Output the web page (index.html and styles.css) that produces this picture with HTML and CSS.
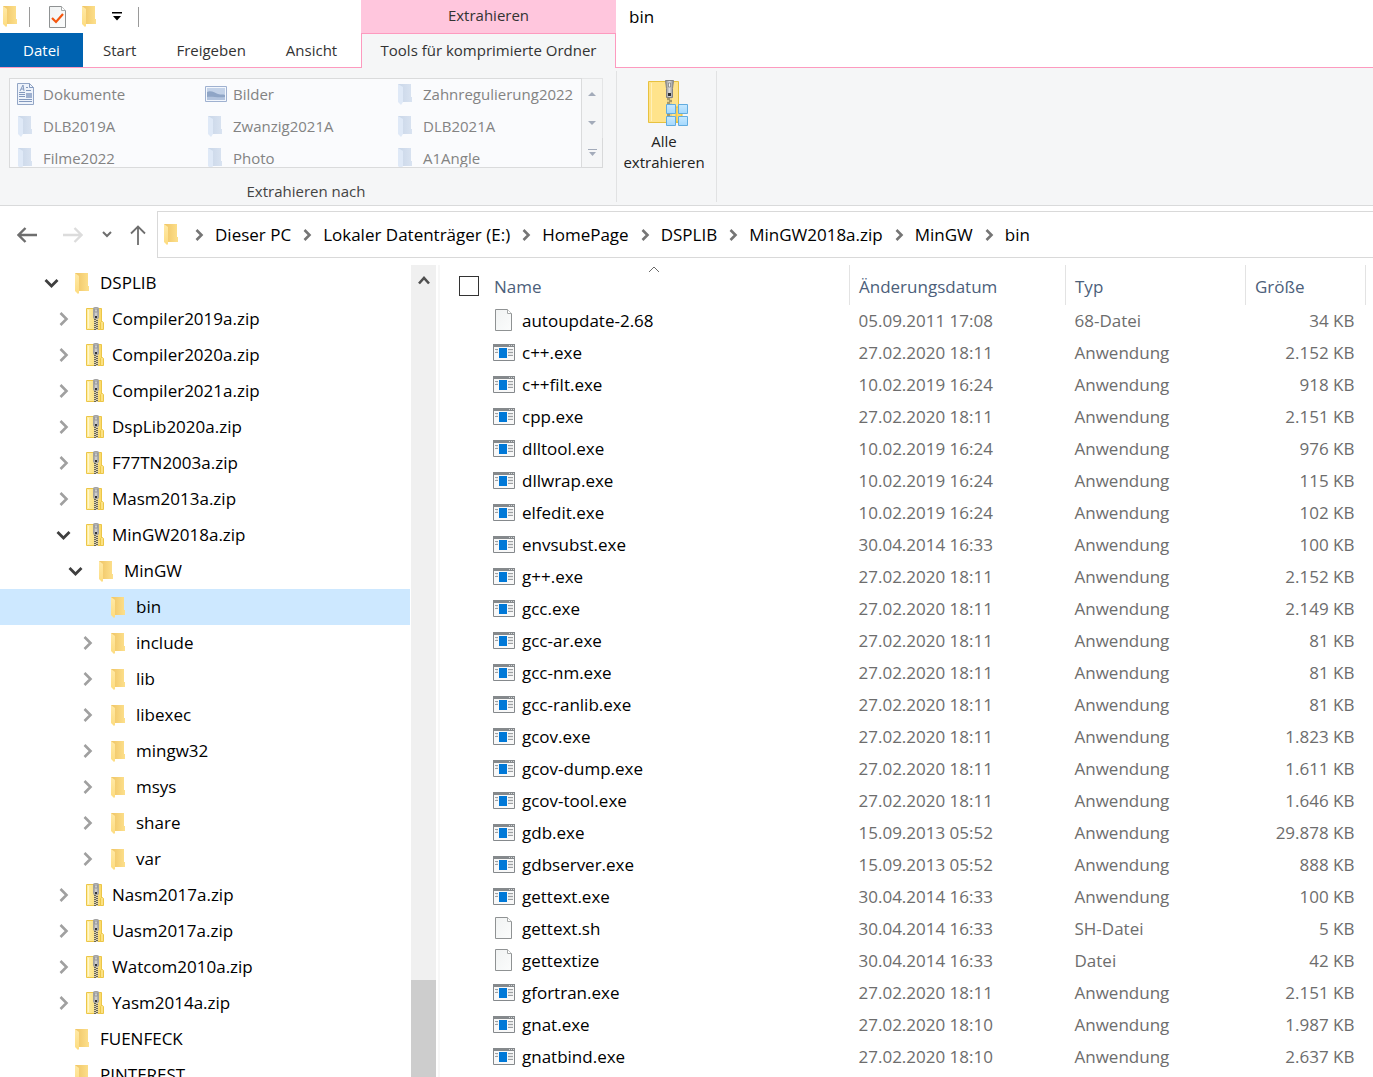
FILE: index.html
```html
<!DOCTYPE html>
<html lang="de">
<head>
<meta charset="utf-8">
<meta name="viewport" content="width=device-width, initial-scale=1">
<title>bin</title>
<link rel="stylesheet" href="styles.css">
</head>
<body>
<svg class="sprite" aria-hidden="true">
  <defs>
    <linearGradient id="g-back"><stop offset="0" stop-color="#efc465"/><stop offset="1" stop-color="#fde08c"/></linearGradient>
    <linearGradient id="g-flap" x2="0" y2="1"><stop offset="0" stop-color="#ffe9a6"/><stop offset="1" stop-color="#fddc80"/></linearGradient>
    <linearGradient id="g-dback"><stop offset="0" stop-color="#c9d6e8"/><stop offset="1" stop-color="#d9e3f1"/></linearGradient>
    <linearGradient id="g-page" x2="1" y2="1"><stop offset="0" stop-color="#f1f3f3"/><stop offset="1" stop-color="#fbfcfc"/></linearGradient>
    <linearGradient id="g-zip"><stop offset="0" stop-color="#fff0a8"/><stop offset="1" stop-color="#fbd968"/></linearGradient>
    <linearGradient id="g-metal"><stop offset="0" stop-color="#8d8d8d"/><stop offset=".5" stop-color="#dcdcdc"/><stop offset="1" stop-color="#8a8a8a"/></linearGradient>
    <linearGradient id="g-tile" x2="0" y2="1"><stop offset="0" stop-color="#c8e9ff"/><stop offset="1" stop-color="#a4d8fd"/></linearGradient>
    <symbol id="folder" viewBox="0 0 14 21">
      <path d="M0 0h13v13h1v5H4L0 17z" fill="url(#g-back)"/>
      <path d="M0 0l4 3v17l-1 1-3-3z" fill="url(#g-flap)"/>
    </symbol>
    <symbol id="folder-off" viewBox="0 0 14 21">
      <path d="M0 0h13v13h1v5H4L0 17z" fill="url(#g-dback)"/>
      <path d="M0 0l5 3v15l-2 3-3-3z" fill="#dfe9f7"/>
    </symbol>
    <symbol id="zip" viewBox="0 0 18 23">
      <path d="M.5 1.500h15v21H.5z" fill="url(#g-zip)" stroke="#ecc648"/>
      <path d="M2.500 3v18" stroke="#fff6cc"/>
      <path d="M14.500 22.500v-7l1-1h1l1 1v7z" fill="#fbe183" stroke="#ecc648"/>
      <path d="M8 11h4v12h-4z" fill="#d8cfae"/>
      <path d="M8 12.500h2M10 13.500h2M8 14.500h2M10 15.500h2M8 16.500h2M10 17.500h2M8 18.500h2M10 19.500h2M8 20.500h2M10 21.500h2M8 22.500h2" stroke="#6b6654"/>
      <rect x="7.500" y=".5" width="5" height="11" rx="1" fill="url(#g-metal)" stroke="#a2a2a2"/>
      <rect x="9" y="2" width="2" height="3" fill="#eee" stroke="#777" stroke-width=".6"/>
      <path d="M9 9h2v2h-2z" fill="#333"/>
    </symbol>
    <symbol id="page" viewBox="0 0 17 22">
      <path d="M.5.5h12l4 4v17H.500z" fill="url(#g-page)" stroke="#8f9293"/>
      <path d="M12.500.5v4h4" fill="#fff" stroke="#a6a9a9"/>
    </symbol>
    <symbol id="app" viewBox="0 0 22 17">
      <path d="M.5.5h21v16H.5z" fill="#f8f8f8" stroke="#85898c"/>
      <path d="M0 0h22v3H0z" fill="#85898c"/>
      <path d="M16 1.500h1M18 1.500h1M20 1.500h1" stroke="#d5d7d8"/>
      <path d="M2 5.500h3M2 8.500h3M15 5.500h5M15 8.500h5M15 11.500h5" stroke="#9da0a2"/>
      <path d="M3 7h2M15 7h5M15 10h5" stroke="#d6d8d9"/>
      <path d="M6 4h8v10H6z" fill="#0078d7"/>
    </symbol>
    <symbol id="right" viewBox="0 0 16 16"><path d="M5.500 2l6 6-6 6" fill="none" stroke="#a0a0a0" stroke-width="2.600"/></symbol>
    <symbol id="down" viewBox="0 0 16 16"><path d="M2.500 5l6 6 6-6" fill="none" stroke="#3f3f3f" stroke-width="2.800"/></symbol>
    <symbol id="sep" viewBox="0 0 16 16"><path d="M5.500 3l5 5-5 5" fill="none" stroke="#757575" stroke-width="2.600"/></symbol>
  </defs>
</svg>

<header class="head">
  <div class="head-main">
    <div class="quick">
      <svg class="folder-ico"><use href="#folder"/></svg>
      <span class="rule"></span>
      <button class="plain" aria-label="Eigenschaften"><svg width="17" height="22" viewBox="0 0 17 22"><use href="#page"/><path d="M3 12l4 4 7-8" fill="none" stroke="#f4560e" stroke-width="2.200"/></svg></button>
      <button class="plain" aria-label="Neuer Ordner"><svg class="folder-ico"><use href="#folder"/></svg></button>
      <button class="plain" aria-label="Symbolleiste anpassen"><svg width="10" height="9" viewBox="0 0 10 9"><path d="M0 0h10v1.500H0zM1 4h8L5 8.500z"/></svg></button>
      <span class="rule"></span>
    </div>
    <nav class="tabs">
      <button class="tab file">Datei</button>
      <button class="tab">Start</button>
      <button class="tab">Freigeben</button>
      <button class="tab">Ansicht</button>
    </nav>
  </div>
  <div class="context">
    <div class="context-title">Extrahieren</div>
    <button class="tab context-tab">Tools für komprimierte Ordner</button>
  </div>
  <h1 class="window-title">bin</h1>
</header>

<section class="ribbon">
  <div class="group targets">
    <div class="gallery">
      <div class="gallery-list">
        <button class="target" disabled><svg width="17" height="22" viewBox="0 0 17 22"><path d="M.5.5h12l4 4v17H.5z" fill="#eef3fb" stroke="#93a6c6"/><path d="M12.500.5v4h4M3 8l3-6 1 6M4 6h3M9 4.500h2M9 7.500h5M2 9.500h6M2 11.500h6M2 13.500h6M2 16.500h13M2 18.500h13" fill="none" stroke="#8399be"/><path d="M9 10h6v5H9z" fill="#9fb1d0"/></svg>Dokumente</button>
        <button class="target" disabled><svg width="22" height="16" viewBox="0 0 22 16"><path d="M.5.5h21v15H.5z" fill="#f3f7fd" stroke="#9fb1d0"/><path d="M2 2h18v12H2z" fill="#c3d2e8"/><path d="M2 6c4-2 8 1 11 2s5 0 7 1v5H2z" fill="#8fa5c6"/><path d="M2 11c5-1 10 1 18 0v3H2z" fill="#b3c4de"/></svg>Bilder</button>
        <button class="target" disabled><svg class="folder-ico"><use href="#folder-off"/></svg>Zahnregulierung2022</button>
        <button class="target" disabled><svg class="folder-ico"><use href="#folder-off"/></svg>DLB2019A</button>
        <button class="target" disabled><svg class="folder-ico"><use href="#folder-off"/></svg>Zwanzig2021A</button>
        <button class="target" disabled><svg class="folder-ico"><use href="#folder-off"/></svg>DLB2021A</button>
        <button class="target" disabled><svg class="folder-ico"><use href="#folder-off"/></svg>Filme2022</button>
        <button class="target" disabled><svg class="folder-ico"><use href="#folder-off"/></svg>Photo</button>
        <button class="target" disabled><svg class="folder-ico"><use href="#folder-off"/></svg>A1Angle</button>
      </div>
      <div class="gallery-scroll">
        <button disabled aria-label="Nach oben"><svg width="8" height="4" viewBox="0 0 8 4"><path d="M0 4l4-4 4 4z" fill="#a3abba"/></svg></button>
        <button disabled aria-label="Nach unten"><svg width="8" height="4" viewBox="0 0 8 4"><path d="M0 0l4 4 4-4z" fill="#a3abba"/></svg></button>
        <button disabled aria-label="Mehr"><svg width="9" height="7" viewBox="0 0 9 7"><path d="M0 0h9v1H0zM1 3l3.500 4L8 3z" fill="#a3abba"/></svg></button>
      </div>
    </div>
    <div class="group-label">Extrahieren nach</div>
  </div>
  <div class="group">
    <button class="extract">
      <svg width="40" height="46" viewBox="0 0 40 46">
        <path d="M.5 1.500h30v41H.5z" fill="#ffe38b" stroke="#e7c13f"/>
        <path d="M3.500 3v38" stroke="#fff0b9"/>
        <path d="M28 27h6v15h-6z" fill="#fbd667" stroke="#e7c13f"/>
        <path d="M19 16h5v26h-5z" fill="#e4cf8c"/>
        <path d="M19 19h3M21 21h3M19 23h3M21 25h3M19 27h3M21 29h3M19 31h3M21 33h3M19 35h3M21 37h3M19 39h3M21 41h3" stroke="#6d6445"/>
        <path d="M17.500.5h8l-1 8v9h-6v-9z" fill="url(#g-metal)" stroke="#858585"/>
        <path d="M20.500 3h2v4h-2z" fill="#f4f4f4" stroke="#777" stroke-width=".7"/>
        <path d="M20 13h3v3h-3z" fill="#2f2f2f"/>
        <g fill="url(#g-tile)" stroke="#62acdf"><path d="M18.500 24.500h9v9h-9z"/><path d="M30.500 24.500h9v9h-9z"/><path d="M18.500 36.500h9v9h-9z"/><path d="M30.500 36.500h9v9h-9z"/></g>
      </svg>
      <span>Alle<br>extrahieren</span>
    </button>
  </div>
</section>

<nav class="navbar" aria-label="Navigation">
  <button class="plain back" aria-label="Zurück"><svg width="20" height="16" viewBox="0 0 20 16"><path d="M20 8H2M8.500 1l-7 7 7 7" fill="none" stroke="#6e6e6e" stroke-width="2.400"/></svg></button>
  <button class="plain forward" disabled aria-label="Vorwärts"><svg width="20" height="16" viewBox="0 0 20 16"><path d="M0 8h18M11.500 1l7 7-7 7" fill="none" stroke="#dcdcdc" stroke-width="2.400"/></svg></button>
  <button class="plain recent" aria-label="Zuletzt besucht"><svg width="10" height="7" viewBox="0 0 10 7"><path d="M1 1l4 4 4-4" fill="none" stroke="#6e6e6e" stroke-width="2"/></svg></button>
  <button class="plain up" aria-label="Nach oben"><svg width="16" height="20" viewBox="0 0 16 20"><path d="M8 20V2M1 8.500l7-7 7 7" fill="none" stroke="#6e6e6e" stroke-width="1.800"/></svg></button>
  <div class="address">
    <svg class="folder-ico"><use href="#folder"/></svg>
    <svg class="sep"><use href="#sep"/></svg><a href="#">Dieser PC</a>
    <svg class="sep"><use href="#sep"/></svg><a href="#">Lokaler Datenträger (E:)</a>
    <svg class="sep"><use href="#sep"/></svg><a href="#">HomePage</a>
    <svg class="sep"><use href="#sep"/></svg><a href="#">DSPLIB</a>
    <svg class="sep"><use href="#sep"/></svg><a href="#">MinGW2018a.zip</a>
    <svg class="sep"><use href="#sep"/></svg><a href="#">MinGW</a>
    <svg class="sep"><use href="#sep"/></svg><a href="#">bin</a>
  </div>
</nav>

<main class="panes">
  <ul class="tree">
    <li class="node l0"><svg class="chev"><use href="#down"/></svg><svg class="ico"><use href="#folder"/></svg>DSPLIB</li>
    <li class="node l1"><svg class="chev"><use href="#right"/></svg><svg class="ico zip"><use href="#zip"/></svg>Compiler2019a.zip</li>
    <li class="node l1"><svg class="chev"><use href="#right"/></svg><svg class="ico zip"><use href="#zip"/></svg>Compiler2020a.zip</li>
    <li class="node l1"><svg class="chev"><use href="#right"/></svg><svg class="ico zip"><use href="#zip"/></svg>Compiler2021a.zip</li>
    <li class="node l1"><svg class="chev"><use href="#right"/></svg><svg class="ico zip"><use href="#zip"/></svg>DspLib2020a.zip</li>
    <li class="node l1"><svg class="chev"><use href="#right"/></svg><svg class="ico zip"><use href="#zip"/></svg>F77TN2003a.zip</li>
    <li class="node l1"><svg class="chev"><use href="#right"/></svg><svg class="ico zip"><use href="#zip"/></svg>Masm2013a.zip</li>
    <li class="node l1"><svg class="chev"><use href="#down"/></svg><svg class="ico zip"><use href="#zip"/></svg>MinGW2018a.zip</li>
    <li class="node l2"><svg class="chev"><use href="#down"/></svg><svg class="ico"><use href="#folder"/></svg>MinGW</li>
    <li class="node l3 selected"><svg class="chev"></svg><svg class="ico"><use href="#folder"/></svg>bin</li>
    <li class="node l3"><svg class="chev"><use href="#right"/></svg><svg class="ico"><use href="#folder"/></svg>include</li>
    <li class="node l3"><svg class="chev"><use href="#right"/></svg><svg class="ico"><use href="#folder"/></svg>lib</li>
    <li class="node l3"><svg class="chev"><use href="#right"/></svg><svg class="ico"><use href="#folder"/></svg>libexec</li>
    <li class="node l3"><svg class="chev"><use href="#right"/></svg><svg class="ico"><use href="#folder"/></svg>mingw32</li>
    <li class="node l3"><svg class="chev"><use href="#right"/></svg><svg class="ico"><use href="#folder"/></svg>msys</li>
    <li class="node l3"><svg class="chev"><use href="#right"/></svg><svg class="ico"><use href="#folder"/></svg>share</li>
    <li class="node l3"><svg class="chev"><use href="#right"/></svg><svg class="ico"><use href="#folder"/></svg>var</li>
    <li class="node l1"><svg class="chev"><use href="#right"/></svg><svg class="ico zip"><use href="#zip"/></svg>Nasm2017a.zip</li>
    <li class="node l1"><svg class="chev"><use href="#right"/></svg><svg class="ico zip"><use href="#zip"/></svg>Uasm2017a.zip</li>
    <li class="node l1"><svg class="chev"><use href="#right"/></svg><svg class="ico zip"><use href="#zip"/></svg>Watcom2010a.zip</li>
    <li class="node l1"><svg class="chev"><use href="#right"/></svg><svg class="ico zip"><use href="#zip"/></svg>Yasm2014a.zip</li>
    <li class="node l0"><svg class="chev"></svg><svg class="ico"><use href="#folder"/></svg>FUENFECK</li>
    <li class="node l0"><svg class="chev"></svg><svg class="ico"><use href="#folder"/></svg>PINTEREST</li>
  </ul>
  <div class="scrollbar">
    <button class="plain scroll-up" aria-label="Nach oben scrollen"><svg width="12" height="9" viewBox="0 0 12 9"><path d="M1 7.500l5-5.500 5 5.500" fill="none" stroke="#505050" stroke-width="2.600"/></svg></button>
    <div class="thumb"></div>
  </div>
  <div class="list">
    <table>
      <colgroup><col><col class="c-date"><col class="c-type"><col class="c-size"></colgroup>
      <thead>
        <tr>
          <th class="sorted"><label class="pick"><input type="checkbox">Name</label><svg class="caret" width="12" height="7" viewBox="0 0 12 7"><path d="M1 6l5-5 5 5" fill="none" stroke="#6a6a6a"/></svg></th>
          <th>Änderungsdatum</th><th>Typ</th><th>Größe</th>
        </tr>
      </thead>
      <tbody>
        <tr><td><div class="name"><svg class="page"><use href="#page"/></svg>autoupdate-2.68</div></td><td>05.09.2011 17:08</td><td>68-Datei</td><td>34 KB</td></tr>
        <tr><td><div class="name"><svg class="app"><use href="#app"/></svg>c++.exe</div></td><td>27.02.2020 18:11</td><td>Anwendung</td><td>2.152 KB</td></tr>
        <tr><td><div class="name"><svg class="app"><use href="#app"/></svg>c++filt.exe</div></td><td>10.02.2019 16:24</td><td>Anwendung</td><td>918 KB</td></tr>
        <tr><td><div class="name"><svg class="app"><use href="#app"/></svg>cpp.exe</div></td><td>27.02.2020 18:11</td><td>Anwendung</td><td>2.151 KB</td></tr>
        <tr><td><div class="name"><svg class="app"><use href="#app"/></svg>dlltool.exe</div></td><td>10.02.2019 16:24</td><td>Anwendung</td><td>976 KB</td></tr>
        <tr><td><div class="name"><svg class="app"><use href="#app"/></svg>dllwrap.exe</div></td><td>10.02.2019 16:24</td><td>Anwendung</td><td>115 KB</td></tr>
        <tr><td><div class="name"><svg class="app"><use href="#app"/></svg>elfedit.exe</div></td><td>10.02.2019 16:24</td><td>Anwendung</td><td>102 KB</td></tr>
        <tr><td><div class="name"><svg class="app"><use href="#app"/></svg>envsubst.exe</div></td><td>30.04.2014 16:33</td><td>Anwendung</td><td>100 KB</td></tr>
        <tr><td><div class="name"><svg class="app"><use href="#app"/></svg>g++.exe</div></td><td>27.02.2020 18:11</td><td>Anwendung</td><td>2.152 KB</td></tr>
        <tr><td><div class="name"><svg class="app"><use href="#app"/></svg>gcc.exe</div></td><td>27.02.2020 18:11</td><td>Anwendung</td><td>2.149 KB</td></tr>
        <tr><td><div class="name"><svg class="app"><use href="#app"/></svg>gcc-ar.exe</div></td><td>27.02.2020 18:11</td><td>Anwendung</td><td>81 KB</td></tr>
        <tr><td><div class="name"><svg class="app"><use href="#app"/></svg>gcc-nm.exe</div></td><td>27.02.2020 18:11</td><td>Anwendung</td><td>81 KB</td></tr>
        <tr><td><div class="name"><svg class="app"><use href="#app"/></svg>gcc-ranlib.exe</div></td><td>27.02.2020 18:11</td><td>Anwendung</td><td>81 KB</td></tr>
        <tr><td><div class="name"><svg class="app"><use href="#app"/></svg>gcov.exe</div></td><td>27.02.2020 18:11</td><td>Anwendung</td><td>1.823 KB</td></tr>
        <tr><td><div class="name"><svg class="app"><use href="#app"/></svg>gcov-dump.exe</div></td><td>27.02.2020 18:11</td><td>Anwendung</td><td>1.611 KB</td></tr>
        <tr><td><div class="name"><svg class="app"><use href="#app"/></svg>gcov-tool.exe</div></td><td>27.02.2020 18:11</td><td>Anwendung</td><td>1.646 KB</td></tr>
        <tr><td><div class="name"><svg class="app"><use href="#app"/></svg>gdb.exe</div></td><td>15.09.2013 05:52</td><td>Anwendung</td><td>29.878 KB</td></tr>
        <tr><td><div class="name"><svg class="app"><use href="#app"/></svg>gdbserver.exe</div></td><td>15.09.2013 05:52</td><td>Anwendung</td><td>888 KB</td></tr>
        <tr><td><div class="name"><svg class="app"><use href="#app"/></svg>gettext.exe</div></td><td>30.04.2014 16:33</td><td>Anwendung</td><td>100 KB</td></tr>
        <tr><td><div class="name"><svg class="page"><use href="#page"/></svg>gettext.sh</div></td><td>30.04.2014 16:33</td><td>SH-Datei</td><td>5 KB</td></tr>
        <tr><td><div class="name"><svg class="page"><use href="#page"/></svg>gettextize</div></td><td>30.04.2014 16:33</td><td>Datei</td><td>42 KB</td></tr>
        <tr><td><div class="name"><svg class="app"><use href="#app"/></svg>gfortran.exe</div></td><td>27.02.2020 18:11</td><td>Anwendung</td><td>2.151 KB</td></tr>
        <tr><td><div class="name"><svg class="app"><use href="#app"/></svg>gnat.exe</div></td><td>27.02.2020 18:10</td><td>Anwendung</td><td>1.987 KB</td></tr>
        <tr><td><div class="name"><svg class="app"><use href="#app"/></svg>gnatbind.exe</div></td><td>27.02.2020 18:10</td><td>Anwendung</td><td>2.637 KB</td></tr>
      </tbody>
    </table>
  </div>
</main>
</body>
</html>
```
FILE: styles.css
```css
* { box-sizing: border-box; }

body {
  margin: 0;
  height: 100vh;
  display: flex;
  flex-direction: column;
  overflow: hidden;
  background: #fff;
  color: #000;
  font: 17px/24px "Open Sans", "Noto Sans", sans-serif;
}

svg { display: block; flex: none; }
.sprite { position: absolute; width: 0; height: 0; }
button {
  margin: 0;
  padding: 0;
  border: 0;
  background: none;
  color: inherit;
  font: inherit;
}
.folder-ico { width: 14px; height: 21px; }

/* Title bar and tabs */
.head { display: flex; flex: none; font-size: 15px; color: #333; }
.head-main { width: 361px; border-bottom: 1px solid #fd9abf; }
.quick {
  display: flex;
  align-items: center;
  gap: 16px;
  height: 33px;
  padding-left: 3px;
}
.quick > .folder-ico { margin-right: -4px; }
.rule { width: 1px; height: 20px; background: #9a9a9a; margin-right: 3px; }
.tabs { display: flex; }
.tab { height: 34px; padding: 0 20px; white-space: nowrap; }
.file { width: 83px; background: #0063b1; color: #fff; }
.context { width: 255px; }
.context-title {
  height: 33px;
  line-height: 31px;
  text-align: center;
  background: #ffc6dd;
}
.context-tab {
  width: 100%;
  height: 35px;
  padding: 0 0 2px;
  background: #f5f6f7;
  border: 1px solid #fd9abf;
  border-bottom: 0;
}
.window-title {
  flex: 1;
  margin: 0;
  padding-left: 13px;
  border-bottom: 1px solid #fd9abf;
  font-size: 17px;
  font-weight: 400;
  line-height: 34px;
  color: #000;
}

/* Ribbon */
.ribbon {
  display: flex;
  flex: none;
  height: 138px;
  padding: 3px 0;
  background: #f5f6f7;
  border-bottom: 1px solid #d9dadb;
  font-size: 15px;
}
.group { border-right: 1px solid #e1e2e3; }
.targets { width: 617px; padding: 7px 13px 0 9px; }
.gallery { display: flex; height: 90px; }
.gallery-list {
  flex: 1;
  display: grid;
  grid-template-columns: repeat(3, 190px);
  grid-auto-rows: 32px;
  overflow: hidden;
  background: #fafbfd;
  border: 1px solid #dadbdc;
}
.target {
  display: flex;
  align-items: center;
  padding: 0 0 2px 7px;
  color: #838383;
  white-space: nowrap;
}
.target svg { margin-right: 9px; }
.target svg.folder-ico { margin-left: 1px; margin-right: 11px; }
.target svg[width="22"] { margin-left: -2px; margin-right: 6px; }
.gallery-scroll { width: 21px; display: flex; flex-direction: column; }
.gallery-scroll button {
  flex: 1;
  display: grid;
  place-items: center;
  border: solid #e4e5e6;
  border-width: 0 1px 0 0;
}
.gallery-scroll button:first-child { border-top-width: 1px; }
.gallery-scroll button:last-child { border-bottom-width: 1px; border-color: #d8d9da; }
.group-label { margin-top: 11px; text-align: center; color: #444; }
.extract {
  display: flex;
  flex-direction: column;
  align-items: center;
  width: 99px;
  padding: 9px 5px 0 0;
  color: #222;
  line-height: 21px;
}
.extract svg { margin-left: 8px; }
.extract span { margin-top: 5px; }

/* Address bar */
.navbar {
  display: flex;
  align-items: center;
  flex: none;
  height: 59px;
  padding: 5px 0 7px 17px;
}
.forward { margin-left: 26px; }
.recent { margin-left: 19px; }
.up { margin: 0 11px 0 18px; }
.address {
  flex: 1;
  display: flex;
  align-items: center;
  height: 47px;
  padding-left: 6px;
  border: 1px solid #d9d9d9;
  border-right: 0;
  white-space: nowrap;
}
.address a { color: #000; text-decoration: none; }
.sep { width: 16px; height: 16px; margin: 0 8px; }
.address .folder-ico + .sep { margin-left: 13px; }

/* Folder tree */
.panes { display: flex; flex: 1; min-height: 0; }
.tree {
  width: 410px;
  margin: 0;
  padding: 0;
  overflow: hidden;
  list-style: none;
}
.node { display: flex; align-items: center; height: 36px; white-space: nowrap; }
.l0 { padding-left: 43px; }
.l1 { padding-left: 55px; }
.l2 { padding-left: 67px; }
.l3 { padding-left: 79px; }
.selected { background: #cde8ff; }
.chev { width: 16px; height: 16px; }
.ico { width: 14px; height: 21px; margin: 0 11px 0 16px; }
.ico.zip { width: 18px; height: 23px; margin: 0 8px 2px 15px; }

.scrollbar {
  display: flex;
  flex-direction: column;
  justify-content: space-between;
  width: 25px;
  margin-left: 1px;
  background: #f0f0f0;
}
.scroll-up { display: grid; place-items: center; height: 30px; }
.thumb { height: 12%; background: #cdcdcd; }

/* File list */
.list {
  flex: 1;
  margin-left: 2px;
  padding: 0 7px 0 19px;
  border-left: 2px solid #f7f7f7;
  overflow: hidden;
}
table { width: 100%; table-layout: fixed; border-collapse: collapse; }
.c-date { width: 216px; }
.c-type { width: 180px; }
.c-size { width: 120px; }
th {
  height: 40px;
  padding: 3px 9px 0;
  border-right: 1px solid #e3e3e3;
  font-weight: 400;
  text-align: left;
  color: #4c607a;
}
.sorted { position: relative; padding-left: 0; }
.caret { position: absolute; top: 1px; left: 50%; margin-left: -6px; }
.pick { display: flex; align-items: center; gap: 15px; }
.pick input {
  appearance: none;
  width: 20px;
  height: 20px;
  margin: 0 0 2px;
  border: 1px solid #333;
  background: #fff;
}
td { height: 32px; padding: 0 9px; color: #6d6d6d; white-space: nowrap; }
td:first-child { padding: 0; color: #000; }
td:last-child { padding-right: 11px; text-align: right; }
.name { display: flex; align-items: center; padding-left: 34px; }
.app { width: 22px; height: 17px; margin: 0 7px 2px 0; }
.page { width: 17px; height: 22px; margin: 0 10px 3px 2px; }
```
